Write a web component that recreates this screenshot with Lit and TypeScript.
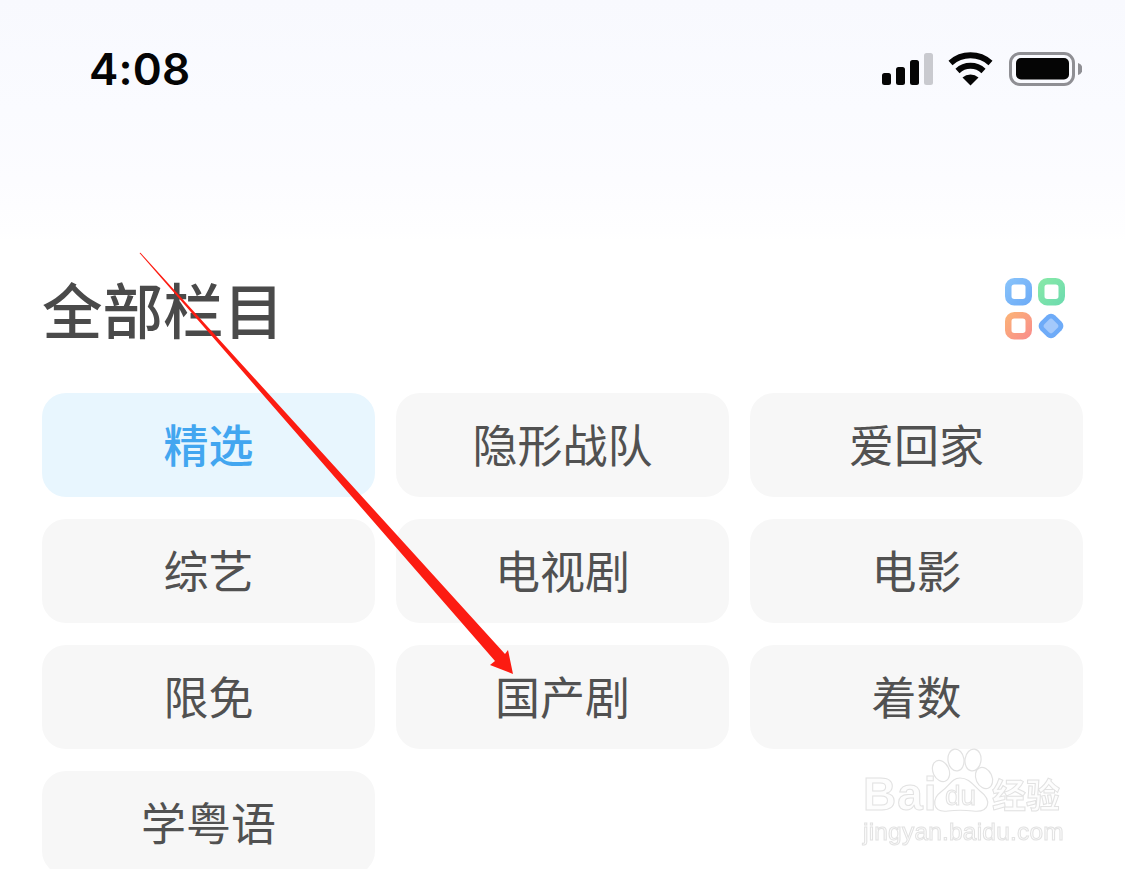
import { LitElement, html, css, svg } from "lit";
import { customElement } from "lit/decorators.js";

const items = ["精选", "隐形战队", "爱回家", "综艺", "电视剧", "电影", "限免", "国产剧", "着数", "学粤语"];

@customElement("app-root")
export class AppRoot extends LitElement {
  static styles = css`
    :host {
      display: block;
      position: relative;
      width: 1125px;
      height: 869px;
      overflow: hidden;
      background: linear-gradient(180deg, #f8f9fe 0, #fafbff 110px, #fcfcff 180px, #fefeff 232px, #ffffff 240px);
      font-family: "Noto Sans CJK SC", "Noto Sans", sans-serif;
    }
    .status {
      display: flex;
      align-items: center;
      justify-content: space-between;
      height: 52px;
      padding: 43px 42px 0 89px;
    }
    .time {
      font-family: Inter, "Liberation Sans", sans-serif;
      font-size: 44px;
      font-weight: 600;
      line-height: 52px;
      color: #050505;
      letter-spacing: 0.2px;
    }
    .icons { display: block; margin-right: 1px; }
    .head {
      display: flex;
      align-items: center;
      justify-content: space-between;
      height: 62px;
      margin-top: 183px;
      padding: 0 59px 0 42px;
    }
    h1 {
      margin: 0 0 3px;
      font-size: 60.5px;
      line-height: 59px;
      font-weight: 500;
      color: #4a4a4a;
    }
    .apps { filter: blur(0.5px); }
    .grid {
      display: grid;
      grid-template-columns: repeat(3, 333px);
      grid-auto-rows: 104px;
      column-gap: 21px;
      row-gap: 22px;
      margin-top: 53px;
      padding-left: 42px;
    }
    .card {
      display: flex;
      align-items: center;
      justify-content: center;
      box-sizing: border-box;
      padding-bottom: 3px;
      border-radius: 24px;
      background: #f7f7f7;
      font-size: 45px;
      color: #515151;
    }
    .card.on {
      background: #e8f6fe;
      color: #42a6f0;
      font-weight: 500;
    }
    .arrow { position: absolute; left: 0; top: 0; pointer-events: none; }
    .mark {
      position: absolute;
      left: 860px;
      top: 745px;
      width: 210px;
      height: 105px;
      color: #fdfdfd;
      -webkit-text-stroke: 1px #e2e2e2;
      font-family: "Liberation Sans", sans-serif;
      filter: blur(0.4px);
    }
    .bai {
      position: absolute;
      left: 3px;
      top: 23px;
      font-size: 46px;
      font-weight: 700;
      line-height: 52px;
      letter-spacing: 1px;
    }
    .du {
      position: absolute;
      left: 85px;
      top: 36px;
      font-size: 28px;
      line-height: 30px;
    }
    .zh {
      position: absolute;
      left: 132px;
      top: 26px;
      font-family: "Noto Sans CJK SC", sans-serif;
      font-size: 34px;
      font-weight: 700;
      line-height: 46px;
    }
    .url {
      position: absolute;
      left: 3px;
      top: 72px;
      font-size: 24.5px;
      line-height: 30px;
      letter-spacing: 0.2px;
      white-space: nowrap;
    }
    .paw { position: absolute; left: 0; top: 0; }
  `;

  private statusIcons() {
    return html`<svg class="icons" width="200" height="36" viewBox="882 51 200 36">
      <rect x="882" y="73" width="9" height="12" rx="2.5" fill="#050505"/>
      <rect x="896" y="67" width="9" height="18" rx="2.5" fill="#050505"/>
      <rect x="910" y="60" width="9" height="25" rx="2.5" fill="#050505"/>
      <rect x="924" y="53" width="9" height="32" rx="2.5" fill="#c9cacf"/>
      <path d="M950.5 63 A30 30 0 0 1 990.5 63" fill="none" stroke="#050505" stroke-width="6"/>
      <path d="M957.5 71 A19 19 0 0 1 983.5 71" fill="none" stroke="#050505" stroke-width="6"/>
      <path d="M962.5 77.5 A12 12 0 0 1 978.5 77.5 L970.5 85.5 Z" fill="#050505"/>
      <rect x="1010.5" y="53.5" width="63" height="31" rx="9.5" fill="none" stroke="#8f8f94" stroke-width="3"/>
      <rect x="1016" y="58" width="53" height="21.5" rx="5" fill="#050505"/>
      <path d="M1078 63 q4.500 1.500 4.500 6 q0 4.500 -4.500 6 Z" fill="#8f8f94"/>
    </svg>`;
  }

  private gridIcon() {
    return html`<svg class="apps" width="61" height="62" viewBox="1005 278 61 62">
      <defs>
        <linearGradient id="a" x1="0" y1="0" x2="1" y2="1"><stop offset="0" stop-color="#86c1fa"/><stop offset="1" stop-color="#6fadf7"/></linearGradient>
        <linearGradient id="b" x1="0" y1="0" x2="1" y2="1"><stop offset="0" stop-color="#86e8a8"/><stop offset="1" stop-color="#6fdcae"/></linearGradient>
        <linearGradient id="c" x1="0" y1="0" x2="1" y2="1"><stop offset="0" stop-color="#fbb078"/><stop offset="1" stop-color="#f9908a"/></linearGradient>
      </defs>
      <rect x="1008.250" y="281.250" width="20.500" height="21" rx="6" fill="#fff" stroke="url(#a)" stroke-width="6.500"/>
      <rect x="1041.250" y="281.250" width="20.500" height="21" rx="6" fill="#fff" stroke="url(#b)" stroke-width="6.500"/>
      <rect x="1008.250" y="315.250" width="20.500" height="21" rx="6" fill="#fff" stroke="url(#c)" stroke-width="6.500"/>
      <rect x="1040.500" y="315.500" width="21" height="21" rx="6" transform="rotate(45 1051 326)" fill="#6eabf8"/>
      <rect x="1045" y="320" width="12" height="12" rx="3" transform="rotate(45 1051 326)" fill="#a4c9fb"/>
    </svg>`;
  }

  render() {
    return html`
      <div class="status">
        <span class="time">4:08</span>
        ${this.statusIcons()}
      </div>
      <div class="head">
        <h1>全部栏目</h1>
        ${this.gridIcon()}
      </div>
      <div class="grid">
        ${items.map((t, i) => html`<div class="card ${i === 0 ? "on" : ""}">${t}</div>`)}
      </div>
      <div class="mark">
        <svg class="paw" width="210" height="105" viewBox="0 0 210 105" fill="#fff" stroke="#e2e2e2" stroke-width="1.200">
          ${svg`
            <ellipse cx="81" cy="26" rx="8" ry="11" transform="rotate(-25 81 26)"/>
            <ellipse cx="96" cy="15" rx="8" ry="11" transform="rotate(-8 96 15)"/>
            <ellipse cx="113" cy="15" rx="8" ry="11" transform="rotate(8 113 15)"/>
            <ellipse cx="124" cy="33" rx="8" ry="11" transform="rotate(-25 124 33)"/>
            <path d="M100 33 C109 33 113 40 120 46 C132 55 130 68 113 66 C104 65 96 65 88 66 C72 68 71 54 82 46 C90 40 92 33 100 33 Z"/>
          `}
        </svg>
        <span class="bai">Bai</span>
        <span class="du">du</span>
        <span class="zh">经验</span>
        <span class="url">jingyan.baidu.com</span>
      </div>
      <svg class="arrow" width="1125" height="869" viewBox="0 0 1125 869">
        <path d="M139.500 253 L140.500 252.800 L505 654 L508 650 L513 674 L490 665 L495 661 Z" fill="#fc1c12"/>
      </svg>
    `;
  }
}
